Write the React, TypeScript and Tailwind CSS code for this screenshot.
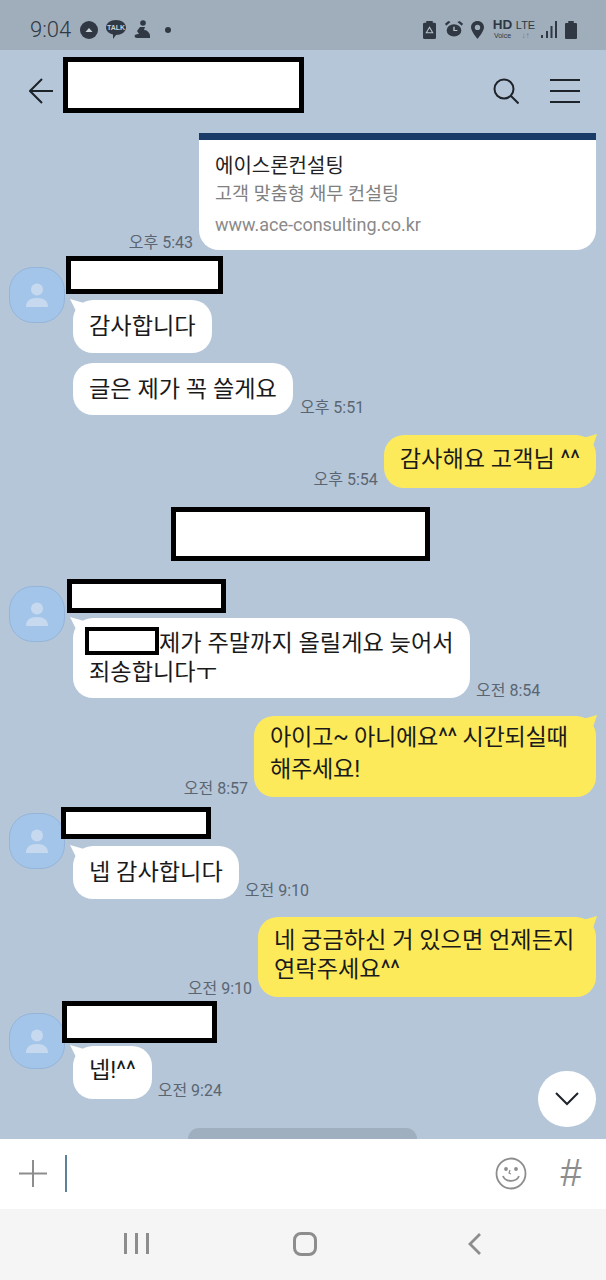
import React from "react";

const FONT = "font-['Roboto','Noto_Sans_CJK_KR',sans-serif]";

function Redacted({ className }: { className: string }) {
  return <div className={`shrink-0 border-black bg-white ${className}`} />;
}

function Time({ children, className = "" }: { children: React.ReactNode; className?: string }) {
  return (
    <span className={`mb-[-2px] shrink-0 text-[16px] leading-[20px] text-[#5a6571] ${className}`}>{children}</span>
  );
}

function Avatar({ className = "" }: { className?: string }) {
  return (
    <div
      className={`flex h-[56px] w-[56px] shrink-0 items-center justify-center rounded-[24px] border border-[#94b5da] bg-[#a4c5ea] ${className}`}
    >
      <svg width="24" height="26" viewBox="0 0 24 26">
        <circle cx="12" cy="7.5" r="6" fill="#c6d9ef" />
        <path d="M1 25c0-6 4-9 11-9s11 3 11 9z" fill="#c6d9ef" />
      </svg>
    </div>
  );
}

function Bubble({
  mine,
  tail,
  className = "",
  children,
}: {
  mine?: boolean;
  tail?: boolean;
  className?: string;
  children: React.ReactNode;
}) {
  return (
    <div
      className={`relative rounded-[20px] px-4 py-[10px] text-[23.2px] leading-[33px] text-[#1a1a1a] ${
        mine ? "bg-[#fdea5b]" : "bg-white"
      } ${className}`}
    >
      {tail && !mine && (
        <svg className="absolute left-[-3px] top-[-1px]" width="14" height="12" viewBox="0 0 14 12">
          <path d="M0 0 L14 4 L6 12 Z" fill="#fff" />
        </svg>
      )}
      {tail && mine && (
        <svg className="absolute right-[-1px] top-[-1px]" width="14" height="12" viewBox="0 0 14 12">
          <path d="M14 0 L0 4 L10 12 Z" fill="#fdea5b" />
        </svg>
      )}
      {children}
    </div>
  );
}

function StatusBar() {
  return (
    <div className="flex h-[50px] shrink-0 items-center justify-between bg-[#a0aebc] pl-[30px] pr-[29px] pt-[9px] text-[#2f3843]">
      <div className="flex items-center">
        <span className="w-[41px] text-[22px] font-light leading-none">9:04</span>
        <svg className="ml-[9px]" width="18" height="18" viewBox="0 0 18 18">
          <circle cx="9" cy="9" r="9" fill="#2f3843" />
          <path d="M5.5 11 L9 7 L12.5 11z" fill="#c8d0d8" />
        </svg>
        <svg className="ml-[8px]" width="20" height="19" viewBox="0 0 20 19">
          <path d="M10 0c5.500 0 10 3 10 7.500S15.500 15 10 15l-3 4v-4.500C3 13.500 0 11 0 7.500 0 3 4.500 0 10 0z" fill="#2f3843" />
          <text x="10" y="10" textAnchor="middle" fontSize="7" fontWeight="700" fill="#c8d0d8" fontFamily="Liberation Sans">TALK</text>
        </svg>
        <svg className="ml-[8px]" width="16" height="19" viewBox="0 0 16 19">
          <circle cx="9" cy="3" r="2.800" fill="#2f3843" />
          <path d="M6 7h5l-1 3c3 0 5 2 6 5l1 3H3c-2 0-3-2-2-3 1-1 3-1 4-1l-2-3z" fill="#2f3843" />
        </svg>
        <span className="ml-[15px] h-[6px] w-[6px] rounded-full bg-[#2f3843]" />
      </div>
      <div className="flex items-center">
        <svg width="13" height="18" viewBox="0 0 12 20" preserveAspectRatio="none">
          <path d="M3 0h6v2h1.500q1.500 0 1.500 1.500V18.500q0 1.500-1.500 1.500h-9Q0 20 0 18.500V3.500Q0 2 1.500 2H3z" fill="#2f3843" />
          <path d="M6 7 L9 13 H3z" fill="none" stroke="#b8c2cc" strokeWidth="1" />
        </svg>
        <svg className="ml-[9px]" width="18" height="17" viewBox="0 0 16 18" preserveAspectRatio="none">
          <circle cx="8" cy="10" r="6.500" fill="#2f3843" />
          <path d="M8 6v4h3" fill="none" stroke="#b8c2cc" strokeWidth="1.200" />
          <path d="M0 3l3-3 2 1-4 4zM16 3l-3-3-2 1 4 4z" fill="#2f3843" />
        </svg>
        <svg className="ml-[8px]" width="13" height="18" viewBox="0 0 13 18">
          <path fillRule="evenodd" d="M6.500 0C10 0 13 2.700 13 6.300 13 10.500 6.500 18 6.500 18S0 10.500 0 6.300C0 2.700 3 0 6.500 0zm0 3.700a2.700 2.700 0 1 0 0 5.400 2.700 2.700 0 0 0 0-5.400z" fill="#2f3843" />
        </svg>
        <div className="ml-[9px] flex w-[19px] flex-col items-center font-['Liberation_Sans']">
          <span className="text-[13.5px] font-bold leading-[12px]">HD</span>
          <span className="mt-[1px] text-[7px] leading-[8px]">Voice</span>
        </div>
        <div className="ml-[5px] flex w-[17px] flex-col items-center font-['Liberation_Sans']">
          <span className="text-[11px] leading-[12px]">LTE</span>
          <span className="text-[8px] leading-[9px] text-[#6f7a86]">↓↑</span>
        </div>
        <svg className="ml-[7px]" width="16" height="17" viewBox="0 0 16 17">
          <rect x="0" y="14" width="2" height="3" fill="#2f3843" />
          <rect x="5" y="10" width="2" height="7" fill="#2f3843" />
          <rect x="9.500" y="5" width="2" height="12" fill="#2f3843" />
          <rect x="14" y="0" width="2" height="17" fill="#2f3843" />
        </svg>
        <svg className="ml-[8px]" width="12" height="18" viewBox="0 0 11 18" preserveAspectRatio="none">
          <path d="M3 0h5v2h2q1 0 1 1v14q0 1-1 1H1q-1 0-1-1V3q0-1 1-1h2z" fill="#2f3843" />
        </svg>
      </div>
    </div>
  );
}

function Header() {
  return (
    <div className="flex h-[70px] shrink-0 items-center pl-[29px] pr-[26px]">
      <svg className="mt-[12px]" width="24" height="26" viewBox="0 0 24 26" fill="none" stroke="#1e232a" strokeWidth="2">
        <path d="M24 13H2M13 1 1 13l12 12" />
      </svg>
      <Redacted className="ml-[10px] h-[56px] w-[241px] border-[5px]" />
      <svg className="ml-auto mt-[12px]" width="26" height="26" viewBox="0 0 26 26" fill="none" stroke="#1e232a" strokeWidth="2">
        <circle cx="11" cy="11" r="9.500" />
        <path d="M18 18l7.500 7.500" />
      </svg>
      <div className="ml-[31px] mt-[12px] flex w-[30px] flex-col gap-[8.500px]">
        <span className="h-[2.500px] bg-[#1e232a]" />
        <span className="h-[2.500px] bg-[#1e232a]" />
        <span className="h-[2.500px] bg-[#1e232a]" />
      </div>
    </div>
  );
}

function Chat() {
  return (
    <div className="relative flex min-h-0 flex-1 flex-col overflow-hidden pt-[13px]">
      {/* link card */}
      <div className="flex items-end justify-end pr-[10px]">
        <Time className="!mb-[-3px] mr-[6px]">오후 5:43</Time>
        <div className="h-[117px] w-[397px] overflow-hidden rounded-b-[20px] bg-white">
          <div className="h-[7px] bg-[#1a3a68]" />
          <div className="pl-[16px]">
            <div className="mt-[12px] text-[20px] leading-[29px] text-[#222]">에이스론컨설팅</div>
            <div className="text-[18.5px] leading-[27px] text-[#808080]">고객 맞춤형 채무 컨설팅</div>
            <div className="mt-[4px] text-[18px] leading-[25px] text-[#8a8a8a]">www.ace-consulting.co.kr</div>
          </div>
        </div>
      </div>

      {/* first sender */}
      <div className="mt-[6px] flex pl-[9px]">
        <Avatar className="mt-[11px]" />
        <div className="ml-[8px] flex flex-col items-start">
          <Redacted className="ml-[-7px] h-[38px] w-[157px] border-[5px]" />
          <Bubble tail className="mt-[6px]">감사합니다</Bubble>
          <div className="mt-[10px] flex items-end">
            <Bubble className="!py-[9.500px]">글은 제가 꼭 쓸게요</Bubble>
            <Time className="!mb-[-3px] ml-[7px]">오후 5:51</Time>
          </div>
        </div>
      </div>

      <div className="mt-[20px] flex items-end justify-end pr-[10px]">
        <Time className="mr-[6px]">오후 5:54</Time>
        <Bubble mine tail className="!pb-[12px] !pt-[8px]">감사해요 고객님 ^^</Bubble>
      </div>

      <Redacted className="ml-[171px] mt-[19px] h-[54px] w-[259px] border-[5px]" />

      {/* second sender */}
      <div className="mt-[18px] flex pl-[9px]">
        <Avatar className="mt-[7px]" />
        <div className="ml-[8px] flex flex-col items-start">
          <Redacted className="ml-[-6px] h-[34px] w-[159px] border-[5px]" />
          <div className="mt-[5px] flex items-end">
            <Bubble tail className="h-[80px] w-[397px] !px-[12px] !pt-[11px] !leading-[29px]">
              <span className="absolute left-[12px] top-[9px] h-[28px] w-[74px] border-[4px] border-black bg-white" />
              <span className="inline-block w-[74px]" />
              제가 주말까지 올릴게요 늦어서
              <br />
              <span className="pl-[4px]">죄송합니다ㅜ</span>
            </Bubble>
            <Time className="!mb-[-3px] ml-[6px]">오전 8:54</Time>
          </div>
        </div>
      </div>

      <div className="mt-[18px] flex items-end justify-end pr-[10px]">
        <Time className="mr-[6px]">오전 8:57</Time>
        <Bubble mine tail className="h-[81px] w-[342px] !pt-[5px] !leading-[32px] tracking-[-0.3px]">
          아이고~ 아니에요^^ 시간되실때
          <br />
          해주세요!
        </Bubble>
      </div>

      {/* third sender */}
      <div className="mt-[10px] flex pl-[9px]">
        <Avatar className="mt-[6px]" />
        <div className="ml-[8px] flex flex-col items-start">
          <Redacted className="ml-[-12px] h-[32px] w-[150px] border-[5px]" />
          <div className="mt-[7px] flex items-end">
            <Bubble tail>넵 감사합니다</Bubble>
            <Time className="ml-[6px]">오전 9:10</Time>
          </div>
        </div>
      </div>

      <div className="mt-[18px] flex items-end justify-end pr-[10px]">
        <Time className="mr-[6px]">오전 9:10</Time>
        <Bubble mine tail className="h-[80px] w-[338px] !pt-[9px] !leading-[29px]">
          네 궁금하신 거 있으면 언제든지
          <br />
          연락주세요^^
        </Bubble>
      </div>

      {/* fourth sender */}
      <div className="mt-[4px] flex pl-[9px]">
        <Avatar className="mt-[12px]" />
        <div className="ml-[8px] flex flex-col items-start">
          <Redacted className="ml-[-11px] h-[42px] w-[155px] border-[5px]" />
          <div className="mt-[3px] flex items-end">
            <Bubble tail className="!pb-[12px] !pt-[8px]">넵!^^</Bubble>
            <Time className="ml-[6px]">오전 9:24</Time>
          </div>
        </div>
      </div>

      {/* scroll to bottom */}
      <div className="absolute bottom-[12px] right-[10px] flex h-[56px] w-[58px] items-center justify-center rounded-full bg-white">
        <svg width="24" height="14" viewBox="0 0 24 14" fill="none" stroke="#1e232a" strokeWidth="2">
          <path d="M1 1l11 11L23 1" />
        </svg>
      </div>
      <div className="absolute bottom-0 left-[188px] h-[11px] w-[229px] rounded-t-[14px] bg-[#9fafbf]" />
    </div>
  );
}

function InputBar() {
  return (
    <div className="flex h-[70px] shrink-0 items-center bg-white pb-[2px] pl-[19px] pr-[24px]">
      <svg width="28" height="27" viewBox="0 0 28 27" stroke="#8d8d8d" strokeWidth="2">
        <path d="M14 0v27M0 13.500h28" />
      </svg>
      <span className="ml-[18px] h-[37px] w-[2px] bg-[#5b8296]" />
      <svg className="ml-auto" width="32" height="33" viewBox="0 0 32 33" fill="none" stroke="#8d8d8d" strokeWidth="1.800">
        <ellipse cx="16" cy="16.500" rx="14.500" ry="15" />
        <path d="M8 19c2 6 13 7 16 0" />
        <circle cx="11" cy="12" r="1" fill="#8d8d8d" />
        <circle cx="21" cy="12" r="1" fill="#8d8d8d" />
        <path d="M15 13l-1 3 2 1" strokeWidth="1.200" />
      </svg>
      <span className="ml-[33px] w-[22px] text-center font-['Liberation_Sans'] text-[38px] leading-none text-[#8d8d8d]">#</span>
    </div>
  );
}

function NavBar() {
  return (
    <div className="flex h-[71px] shrink-0 items-center bg-[#f5f5f5] pb-[2px] pl-[124px] pr-[124px]">
      <div className="flex gap-[8.500px]">
        <span className="h-[21px] w-[2.500px] bg-[#8d8d8d]" />
        <span className="h-[21px] w-[2.500px] bg-[#8d8d8d]" />
        <span className="h-[21px] w-[2.500px] bg-[#8d8d8d]" />
      </div>
      <span className="ml-[144px] mr-auto h-[24px] w-[24px] rounded-[8px] border-[3px] border-[#8d8d8d]" />
      <svg width="15" height="24" viewBox="0 0 15 24" fill="none" stroke="#8d8d8d" strokeWidth="2.800">
        <path d="M13 2 3 12l10 10" />
      </svg>
    </div>
  );
}

export default function App() {
  return (
    <div className={`flex h-[1280px] w-[606px] flex-col overflow-hidden bg-[#b5c6d9] ${FONT}`}>
      <StatusBar />
      <Header />
      <Chat />
      <InputBar />
      <NavBar />
    </div>
  );
}
